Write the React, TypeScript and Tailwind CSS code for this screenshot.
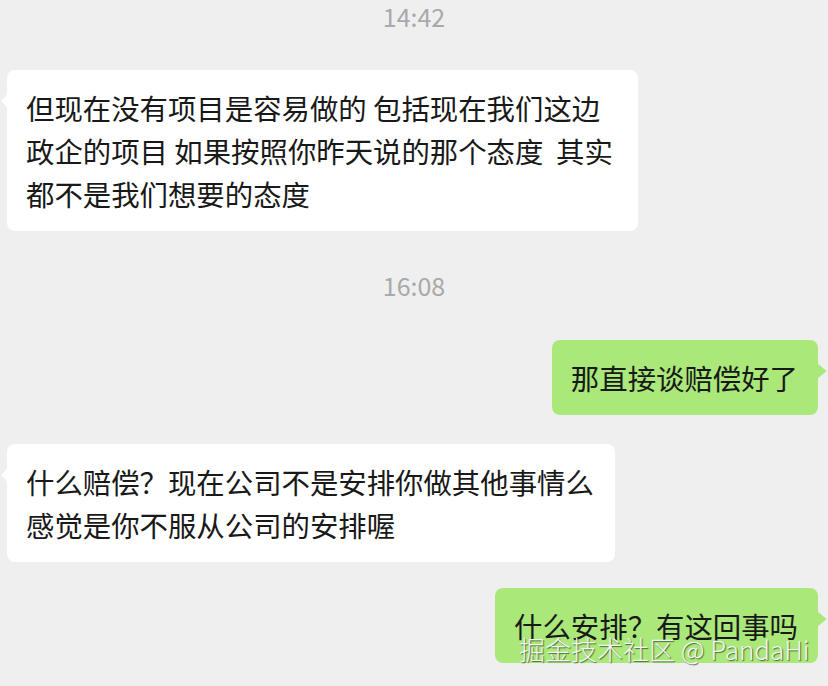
const font = { fontFamily: '"Noto Sans CJK SC", "Noto Sans", sans-serif' };

function Time({ children, className }: { children: string; className?: string }) {
  return (
    <div className={`text-center text-[25px] leading-[30px] text-[#a9a9a9] ${className ?? ""}`}>
      {children}
    </div>
  );
}

function LeftBubble({ lines, className }: { lines: string[]; className?: string }) {
  return (
    <div className={`relative ml-[7px] self-start rounded-[8px] bg-white pl-[19px] pr-[20px] py-[16px] ${className ?? ""}`}>
      <svg className="absolute -left-[6px] top-[23px]" width="7" height="16" viewBox="0 0 7 16">
        <path d="M7 0 L0.5 8 L7 16 Z" fill="#ffffff" />
      </svg>
      {lines.map((l, i) => (
        <div key={i} className="whitespace-pre text-[28.4px] leading-[43px] text-[#191919]">
          {l}
        </div>
      ))}
    </div>
  );
}

function RightBubble({ text, className }: { text: string; className?: string }) {
  return (
    <div className={`relative mr-[10px] self-end rounded-[8px] bg-[#a9e879] pl-[19px] pr-[20px] py-[16px] ${className ?? ""}`}>
      <svg className="absolute -right-[9px] top-[23px]" width="10" height="16" viewBox="0 0 10 16">
        <path d="M0 0 L9.5 8 L0 16 Z" fill="#a9e879" />
      </svg>
      <div className="whitespace-pre text-[28.4px] leading-[43px] text-[#191919]">{text}</div>
    </div>
  );
}

export default function App() {
  return (
    <div className="relative flex h-[686px] w-[828px] flex-col overflow-hidden bg-[#efefef] pt-[1px]" style={font}>
      <Time className="mt-0">14:42</Time>
      <LeftBubble
        className="mt-[39px] w-[631px]"
        lines={[
          "但现在没有项目是容易做的 包括现在我们这边",
          "政企的项目 如果按照你昨天说的那个态度  其实",
          "都不是我们想要的态度",
        ]}
      />
      <Time className="mt-[39px]">16:08</Time>
      <RightBubble className="mt-[40px]" text="那直接谈赔偿好了" />
      <LeftBubble
        className="mt-[29px] w-[608px]"
        lines={["什么赔偿？现在公司不是安排你做其他事情么", "感觉是你不服从公司的安排喔"]}
      />
      <RightBubble className="mt-[26px]" text="什么安排？有这回事吗" />

      <div className="pointer-events-none absolute left-[519px] top-[633px] whitespace-pre text-[26px] font-light leading-[32px] text-[#f4f4f4] [text-shadow:1px_1px_1px_rgba(0,0,0,0.55)]">
        掘金技术社区 @ PandaHi
      </div>
    </div>
  );
}
